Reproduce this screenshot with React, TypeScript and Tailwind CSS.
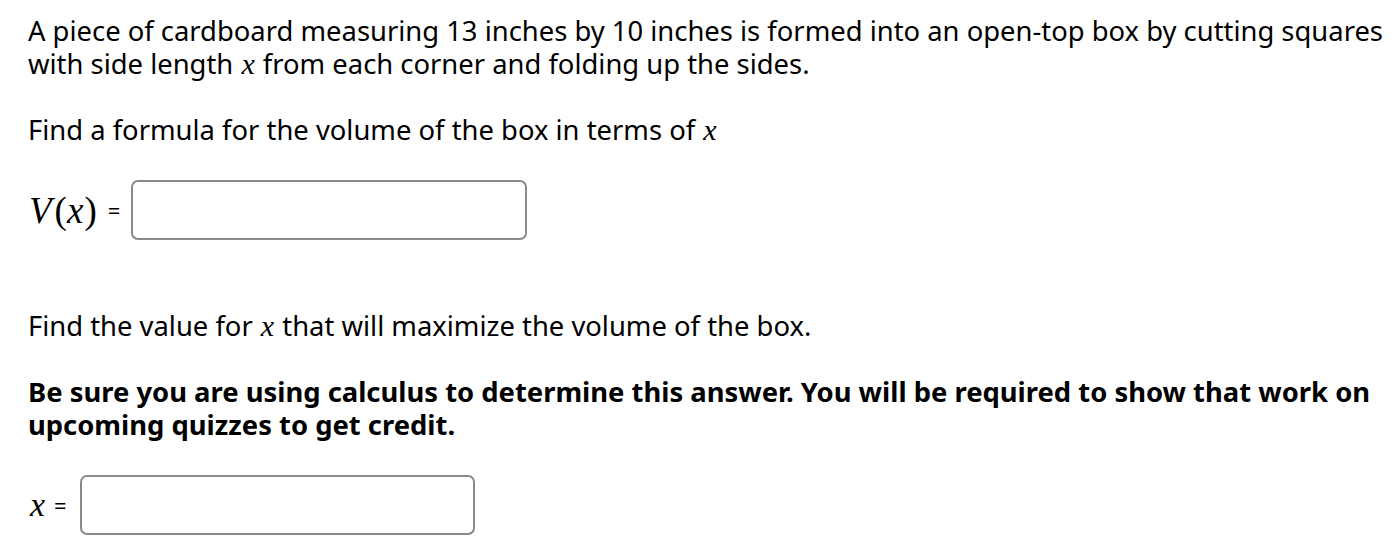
function MX({ children, cls = "" }: { children: React.ReactNode; cls?: string }) {
  return (
    <span className={"italic leading-none " + cls} style={{ fontFamily: "'Liberation Serif', 'DejaVu Serif', serif" }}>
      {children}
    </span>
  );
}

export default function App() {
  return (
    <div
      className="w-[1398px] h-[552px] bg-white text-black pl-[28px] pt-[14px] text-[27.4px] leading-[33px] overflow-hidden"
      style={{ fontFamily: "'Noto Sans', sans-serif" }}
    >
      <div className="whitespace-nowrap">
        <div>A piece of cardboard measuring 13 inches by 10 inches is formed into an open-top box by cutting squares</div>
        <div>
          with side length <MX cls="text-[30px] inline-block px-[1px]">x</MX> from each corner and folding up the sides.
        </div>
      </div>
      <p className="mt-[33px]">
        Find a formula for the volume of the box in terms of <MX cls="text-[30px] inline-block px-[1px]">x</MX>
      </p>
      <div className="mt-[34px] flex items-center h-[60px]">
        <span className="text-[37px] leading-none ml-[1px]" style={{ fontFamily: "'Liberation Serif', serif" }}>
          <span className="italic">V</span>
          <span className="ml-[3px]">(</span>
          <span className="italic">x</span>
          <span className="ml-[1px]">)</span>
        </span>
        <span className="ml-[11px] text-[22px]">=</span>
        <div className="ml-[11px] w-[396px] h-[60px] shrink-0 border-2 border-[#8a8a8a] rounded-[7px] bg-white" />
      </div>
      <p className="mt-[69px]">
        Find the value for <MX cls="text-[30px] inline-block px-[1px]">x</MX> that will maximize the volume of the box.
      </p>
      <div className="mt-[33px] font-bold whitespace-nowrap">
        <div>Be sure you are using calculus to determine this answer. You will be required to show that work on</div>
        <div>upcoming quizzes to get credit.</div>
      </div>
      <div className="mt-[34px] flex items-center h-[60px]">
        <MX cls="text-[34px] ml-[2px]">x</MX>
        <span className="ml-[9px] text-[22px]">=</span>
        <div className="ml-[13px] w-[395px] h-[60px] shrink-0 border-2 border-[#8a8a8a] rounded-[7px] bg-white" />
      </div>
    </div>
  );
}
